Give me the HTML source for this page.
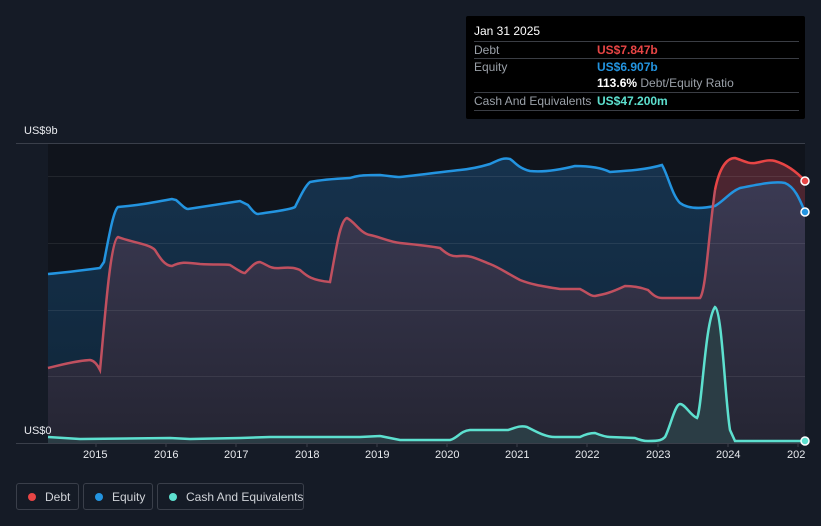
<!DOCTYPE html>
<html><head><style>
body{margin:0;width:821px;height:526px;background:#151b26;font-family:"Liberation Sans",sans-serif;overflow:hidden;position:relative}
.tt{position:absolute;left:466px;top:16px;width:339px;height:103px;background:#000;border-radius:2px;color:#fff;font-size:12px}
.tt .r{position:absolute;left:8px;right:6px;border-top:1px solid #3a3d44;height:17px;line-height:17px}
.tt .l{color:#9aa0a8;position:absolute;left:0}
.tt .v{position:absolute;left:123px;white-space:nowrap}
.leg{position:absolute;top:483px;height:27px;border:1px solid #3a3f4a;border-radius:3px;color:#d0d3d8;font-size:12px;line-height:26px;box-sizing:border-box;white-space:nowrap}
.leg i{position:absolute;left:11px;top:9px;width:8px;height:8px;border-radius:50%}
.leg span{position:absolute;left:28px}
.ax{position:absolute;top:449px;color:#e8eaee;font-size:11px}
</style></head><body>
<svg width="821" height="526" style="position:absolute;left:0;top:0">
<defs>
<clipPath id="eq"><path d="M48,274 C60,273 70,272 100,268 L104,262 C110,230 114,210 118,207 C130,206 140,205 172,199 L176,200 C182,205 185,209 188,209 C200,207 220,204 240,201 L248,205 C252,210 255,214 258,214 C270,212 290,210 295,207 C300,197 305,186 310,182 C320,180 330,179 350,178 C356,176 360,175 380,175 C390,176 395,177 400,177 C420,175 440,172 460,170 C470,169 480,167 490,164 C497,161 503,157 510,159 C515,162 518,168 530,171 C540,172 555,171 575,166 C585,166 600,167 610,172 C625,171 645,170 662,165 C668,175 672,195 680,203 C688,209 700,209 715,206 C725,200 730,192 740,188 C760,184 775,181 785,183 C795,187 800,200 805,212 L805,443 L48,443 Z"/></clipPath>
<linearGradient id="pg" x1="0" y1="0" x2="0" y2="1"><stop offset="0" stop-color="#3d3c56"/><stop offset="1" stop-color="#252533"/></linearGradient>
<linearGradient id="bg" x1="0" y1="0" x2="0" y2="1"><stop offset="0" stop-color="#16324d"/><stop offset="1" stop-color="#0f2538"/></linearGradient>
</defs>
<rect x="48" y="143" width="757" height="300" fill="#10141c"/>
<path d="M48,274 C60,273 70,272 100,268 L104,262 C110,230 114,210 118,207 C130,206 140,205 172,199 L176,200 C182,205 185,209 188,209 C200,207 220,204 240,201 L248,205 C252,210 255,214 258,214 C270,212 290,210 295,207 C300,197 305,186 310,182 C320,180 330,179 350,178 C356,176 360,175 380,175 C390,176 395,177 400,177 C420,175 440,172 460,170 C470,169 480,167 490,164 C497,161 503,157 510,159 C515,162 518,168 530,171 C540,172 555,171 575,166 C585,166 600,167 610,172 C625,171 645,170 662,165 C668,175 672,195 680,203 C688,209 700,209 715,206 C725,200 730,192 740,188 C760,184 775,181 785,183 C795,187 800,200 805,212 L805,443 L48,443 Z" fill="url(#bg)"/>
<path d="M48,368 C60,365 75,361 90,360 C96,361 99,368 100,370 C104,330 110,240 118,237 C130,242 150,244 155,250 C160,258 165,266 172,266 C180,262 185,262 200,264 C215,265 225,264 230,265 C238,270 242,273 245,273 C252,266 255,262 260,262 C268,265 270,269 280,268 C292,267 295,268 300,270 C306,275 310,280 330,282 C336,250 340,220 347,218 C355,222 360,233 370,235 C380,237 390,242 400,243 C420,245 430,246 440,248 C448,255 452,257 460,256 C470,255 475,258 490,264 C500,268 505,272 520,280 C530,284 540,286 560,289 L580,289 C588,293 590,296 595,296 C605,294 610,293 625,286 C632,286 640,287 648,290 C652,294 656,298 662,298 L700,298 C706,290 708,240 715,190 C720,165 728,158 735,158 C742,160 748,164 755,163 C762,162 768,159 775,161 C785,164 795,170 805,181 L805,443 L48,443 Z" fill="#4b2530"/>
<g clip-path="url(#eq)">
<path d="M48,368 C60,365 75,361 90,360 C96,361 99,368 100,370 C104,330 110,240 118,237 C130,242 150,244 155,250 C160,258 165,266 172,266 C180,262 185,262 200,264 C215,265 225,264 230,265 C238,270 242,273 245,273 C252,266 255,262 260,262 C268,265 270,269 280,268 C292,267 295,268 300,270 C306,275 310,280 330,282 C336,250 340,220 347,218 C355,222 360,233 370,235 C380,237 390,242 400,243 C420,245 430,246 440,248 C448,255 452,257 460,256 C470,255 475,258 490,264 C500,268 505,272 520,280 C530,284 540,286 560,289 L580,289 C588,293 590,296 595,296 C605,294 610,293 625,286 C632,286 640,287 648,290 C652,294 656,298 662,298 L700,298 C706,290 708,240 715,190 C720,165 728,158 735,158 C742,160 748,164 755,163 C762,162 768,159 775,161 C785,164 795,170 805,181 L805,443 L48,443 Z" fill="url(#pg)"/>
</g>
<g stroke="#ffffff" stroke-opacity="0.08" stroke-width="1">
<line x1="48" y1="176.5" x2="805" y2="176.5"/><line x1="48" y1="243.5" x2="805" y2="243.5"/>
<line x1="48" y1="310.5" x2="805" y2="310.5"/><line x1="48" y1="376.5" x2="805" y2="376.5"/>
</g>
<line x1="16" y1="143.5" x2="805" y2="143.5" stroke="#3a3f4a"/>
<line x1="16" y1="443.5" x2="805" y2="443.5" stroke="#3a3f4a"/>
<g stroke="#3a3f4a"><line x1="96" y1="443" x2="96" y2="447"/><line x1="166" y1="443" x2="166" y2="447"/><line x1="236" y1="443" x2="236" y2="447"/><line x1="307" y1="443" x2="307" y2="447"/><line x1="377" y1="443" x2="377" y2="447"/><line x1="447" y1="443" x2="447" y2="447"/><line x1="517" y1="443" x2="517" y2="447"/><line x1="587" y1="443" x2="587" y2="447"/><line x1="658" y1="443" x2="658" y2="447"/><line x1="728" y1="443" x2="728" y2="447"/><line x1="798" y1="443" x2="798" y2="447"/></g>
<path d="M48,274 C60,273 70,272 100,268 L104,262 C110,230 114,210 118,207 C130,206 140,205 172,199 L176,200 C182,205 185,209 188,209 C200,207 220,204 240,201 L248,205 C252,210 255,214 258,214 C270,212 290,210 295,207 C300,197 305,186 310,182 C320,180 330,179 350,178 C356,176 360,175 380,175 C390,176 395,177 400,177 C420,175 440,172 460,170 C470,169 480,167 490,164 C497,161 503,157 510,159 C515,162 518,168 530,171 C540,172 555,171 575,166 C585,166 600,167 610,172 C625,171 645,170 662,165 C668,175 672,195 680,203 C688,209 700,209 715,206 C725,200 730,192 740,188 C760,184 775,181 785,183 C795,187 800,200 805,212" fill="none" stroke="#2394e0" stroke-width="2.5"/>
<path d="M48,368 C60,365 75,361 90,360 C96,361 99,368 100,370 C104,330 110,240 118,237 C130,242 150,244 155,250 C160,258 165,266 172,266 C180,262 185,262 200,264 C215,265 225,264 230,265 C238,270 242,273 245,273 C252,266 255,262 260,262 C268,265 270,269 280,268 C292,267 295,268 300,270 C306,275 310,280 330,282 C336,250 340,220 347,218 C355,222 360,233 370,235 C380,237 390,242 400,243 C420,245 430,246 440,248 C448,255 452,257 460,256 C470,255 475,258 490,264 C500,268 505,272 520,280 C530,284 540,286 560,289 L580,289 C588,293 590,296 595,296 C605,294 610,293 625,286 C632,286 640,287 648,290 C652,294 656,298 662,298 L700,298 C706,290 708,240 715,190" fill="none" stroke="#c0505f" stroke-width="2.5"/>
<path d="M715,190 C720,165 728,158 735,158 C742,160 748,164 755,163 C762,162 768,159 775,161 C785,164 795,170 805,181" fill="none" stroke="#e84545" stroke-width="2.5"/>
<path d="M48,437 L80,439 L170,438 L190,439 L240,438 L270,437 L360,437 L380,436 L400,440 L450,440 C458,438 460,431 470,430 L508,430 C515,428 520,425 527,427 C535,431 545,437 555,437 L580,437 C586,434 590,433 595,433 C600,435 605,437 610,437 L635,438 C640,440 643,441 648,441 C660,441 662,440 665,437 C670,428 675,404 680,404 C685,404 690,415 697,418 C702,410 705,320 715,307 C722,310 725,400 730,430 L735,441 L805,441 L805,443 L48,443 Z" fill="#2b3d45"/>
<path d="M48,437 L80,439 L170,438 L190,439 L240,438 L270,437 L360,437 L380,436 L400,440 L450,440 C458,438 460,431 470,430 L508,430 C515,428 520,425 527,427 C535,431 545,437 555,437 L580,437 C586,434 590,433 595,433 C600,435 605,437 610,437 L635,438 C640,440 643,441 648,441 C660,441 662,440 665,437 C670,428 675,404 680,404 C685,404 690,415 697,418 C702,410 705,320 715,307 C722,310 725,400 730,430 L735,441 L805,441" fill="none" stroke="#5de0cf" stroke-width="2.5"/>
<circle cx="805" cy="181" r="4" fill="#e84545" stroke="#fff" stroke-width="1.5"/>
<circle cx="805" cy="212" r="4" fill="#2394e0" stroke="#fff" stroke-width="1.5"/>
<circle cx="805" cy="441" r="4" fill="#5de0cf" stroke="#fff" stroke-width="1.5"/>
</svg>
<div style="position:absolute;left:24px;top:125px;color:#e8eaee;font-size:11px">US$9b</div>
<div style="position:absolute;left:24px;top:425px;color:#e8eaee;font-size:11px">US$0</div>
<div class="ax" style="left:83px">2015</div><div class="ax" style="left:154px">2016</div><div class="ax" style="left:224px">2017</div><div class="ax" style="left:295px">2018</div><div class="ax" style="left:365px">2019</div><div class="ax" style="left:435px">2020</div><div class="ax" style="left:505px">2021</div><div class="ax" style="left:575px">2022</div><div class="ax" style="left:646px">2023</div><div class="ax" style="left:716px">2024</div><div class="ax" style="left:787px;width:18px;overflow:hidden">2025</div>
<div class="tt">
<div style="position:absolute;left:8px;top:8px;font-size:12px">Jan 31 2025</div>
<div class="r" style="top:25px"><span class="l">Debt</span><span class="v" style="color:#e84545;font-weight:bold">US$7.847b</span></div>
<div class="r" style="top:42px"><span class="l">Equity</span><span class="v" style="color:#2394e0;font-weight:bold">US$6.907b</span></div>
<div class="r" style="top:59px;border-top:none"><span class="v"><b>113.6%</b> <span style="color:#9aa0a8">Debt/Equity Ratio</span></span></div>
<div class="r" style="top:76px;border-bottom:1px solid #3a3d44"><span class="l">Cash And Equivalents</span><span class="v" style="color:#5de0cf;font-weight:bold">US$47.200m</span></div>
</div>
<div class="leg" style="left:16px;width:63px"><i style="background:#e84545"></i><span>Debt</span></div>
<div class="leg" style="left:83px;width:70px"><i style="background:#2394e0"></i><span>Equity</span></div>
<div class="leg" style="left:157px;width:147px"><i style="background:#5de0cf"></i><span>Cash And Equivalents</span></div>
</body></html>
